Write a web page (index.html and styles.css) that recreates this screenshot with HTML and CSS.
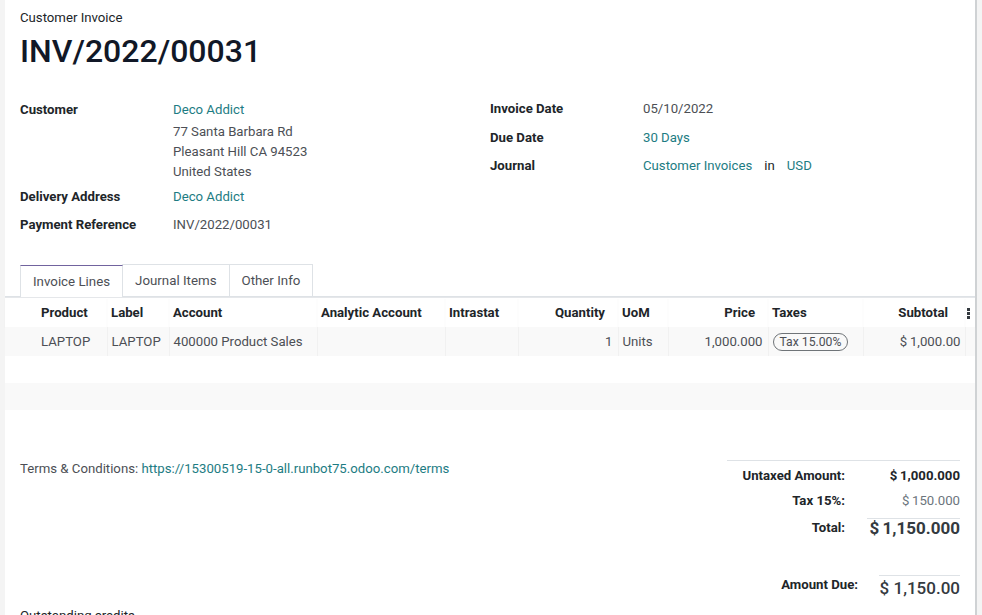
FILE: index.html
```html
<!DOCTYPE html>
<html>
<head>
<meta charset="utf-8">
<link rel="stylesheet" href="styles.css">
</head>
<body>
<div class="page">
  <div class="sheet">
    <div class="head">
      <div class="doc-type">Customer Invoice</div>
      <h1 class="title">INV/2022/00031</h1>
    </div>
    <div class="groups">
      <div class="group">
        <div class="field customer">
          <div class="label">Customer</div>
          <div class="value">
            <a class="link first-link">Deco Addict</a>
            <div class="addr">77 Santa Barbara Rd</div>
            <div class="addr">Pleasant Hill CA 94523</div>
            <div class="addr">United States</div>
          </div>
        </div>
        <div class="field">
          <div class="label">Delivery Address</div>
          <div class="value"><a class="link">Deco Addict</a></div>
        </div>
        <div class="field">
          <div class="label">Payment Reference</div>
          <div class="value">INV/2022/00031</div>
        </div>
      </div>
      <div class="group right">
        <div class="field">
          <div class="label">Invoice Date</div>
          <div class="value">05/10/2022</div>
        </div>
        <div class="field">
          <div class="label">Due Date</div>
          <div class="value"><a class="link">30 Days</a></div>
        </div>
        <div class="field">
          <div class="label">Journal</div>
          <div class="value"><a class="link">Customer Invoices</a><span class="in">in</span><a class="link">USD</a></div>
        </div>
      </div>
    </div>

    <div class="tabs">
      <div class="tab active">Invoice Lines</div>
      <div class="tab">Journal Items</div>
      <div class="tab">Other Info</div>
    </div>

    <table class="lines">
      <colgroup>
        <col style="width:102px"><col style="width:62px"><col style="width:148px"><col style="width:128px"><col style="width:73px"><col style="width:100px"><col style="width:50px"><col style="width:100px"><col style="width:95px"><col style="width:102px"><col style="width:10px">
      </colgroup>
      <thead>
        <tr>
          <th class="first">Product</th>
          <th>Label</th>
          <th>Account</th>
          <th>Analytic Account</th>
          <th>Intrastat</th>
          <th class="num">Quantity</th>
          <th>UoM</th>
          <th class="num">Price</th>
          <th>Taxes</th>
          <th class="num">Subtotal</th>
          <th class="opt"><span class="kebab"><i></i><i></i><i></i></span></th>
        </tr>
      </thead>
      <tbody>
        <tr class="odd">
          <td class="first">LAPTOP</td>
          <td>LAPTOP</td>
          <td>400000 Product Sales</td>
          <td></td>
          <td></td>
          <td class="num">1</td>
          <td>Units</td>
          <td class="num">1,000.000</td>
          <td><span class="badge">Tax 15.00%</span></td>
          <td class="num sub">$&#8201;1,000.00</td>
          <td></td>
        </tr>
        <tr class="empty"><td colspan="11"></td></tr>
        <tr class="empty odd"><td colspan="11"></td></tr>
      </tbody>
    </table>

    <div class="footer">
      <div class="terms">Terms &amp; Conditions: <a class="link">https://15300519-15-0-all.runbot75.odoo.com/terms</a></div>
      <div class="totals">
        <div class="trow untaxed">
          <span class="tlabel">Untaxed Amount:</span>
          <span class="tval strong">$&#8201;1,000.000</span>
        </div>
        <div class="trow tax">
          <span class="tlabel">Tax 15%:</span>
          <span class="tval muted">$&#8201;150.000</span>
        </div>
        <div class="trow total">
          <span class="tlabel">Total:</span>
          <span class="tval big">$&#8201;1,150.000</span>
        </div>
        <div class="trow due">
          <span class="tlabel">Amount Due:</span>
          <span class="tval due-val">$ 1,150.00</span>
        </div>
      </div>
    </div>
    <div class="outstanding">Outstanding credits</div>
  </div>
</div>
</body>
</html>
```

FILE: styles.css
```css
html, body {
  margin: 0;
  padding: 0;
  background: #eceeef;
  overflow: hidden;
}
body {
  font-family: Roboto, "Noto Sans", sans-serif;
  font-size: 13.2px;
  color: #212529;
}
.page {
  padding-left: 5px;
  height: 615px;
  background: #f4f4f4;
  display: flex;
}
.sheet {
  width: 972px;
  flex: none;
  background: #fff;
  border-right: 2px solid #cfd2d4;
  padding: 0 15px 0 15px;
  box-sizing: border-box;
  height: 640px;
}
.head {
  padding-top: 10px;
}
.doc-type {
  font-size: 13.2px;
  line-height: 16px;
  color: #212529;
}
.title {
  margin: 6px 0 0 0;
  font-size: 32px;
  font-weight: 500;
  line-height: 38px;
  color: #111827;
}
.groups {
  display: flex;
  margin-top: 30px;
}
.group {
  width: 470px;
  flex: none;
}
.group.right {
  margin-top: -1px;
}
.field {
  display: flex;
  margin-bottom: 8px;
}
.field.customer {
  margin-bottom: 5px;
}
.first-link {
  margin-bottom: 2px;
}
.label {
  width: 153px;
  flex: none;
  font-weight: 700;
  line-height: 20px;
  color: #212529;
}
.value {
  color: #4c4f55;
  line-height: 20px;
}
.group.right .field {
  margin-bottom: 8.5px;
}
.link {
  color: #1d7c83;
  text-decoration: none;
  display: inline-block;
}
.addr {
  line-height: 20px;
}
.in {
  margin: 0 12px 0 12px;
  color: #212529;
}
.tabs {
  display: flex;
  margin: 21px -15px 0 -15px;
  padding-left: 15px;
  border-bottom: 1px solid #dee2e6;
  height: 32px;
}
.tab {
  border: 1px solid #dee2e6;
  border-bottom: none;
  margin-right: -1px;
  padding: 0 12px;
  line-height: 32px;
  font-size: 13.3px;
  color: #4c4f55;
  background: #fff;
}
.tab.active {
  border-top: 1px solid #71639e;
  position: relative;
  top: 1px;
}
.lines {
  margin: 0 -15px 0 -15px;
  width: 970px;
  border-collapse: collapse;
  table-layout: fixed;
  border-top: 1px solid #e5e7ea;
}
.lines th {
  text-align: left;
  font-weight: 700;
  height: 29px;
  padding: 0 4px;
  color: #212529;
  white-space: nowrap;
  box-shadow: 0 1px 1px rgba(0,0,0,0.06);
}
.lines td {
  height: 29px;
  padding: 0 4px;
  color: #4c4f55;
  white-space: nowrap;
  border-left: 1px solid #f1f1f1;
}
.lines td:first-child { border-left: none; }
.lines .first { padding-left: 36px; }
.lines .num { text-align: right; }
.lines th.num { padding-right: 13px; }
.lines td.num { padding-right: 5px; }
.lines td.sub { padding-right: 4px; }
.lines th.num:nth-child(10) { padding-right: 17px; }
.lines tr.odd td { background: #f9f9f9; }
.lines tr.empty td { height: 27px; }
.badge {
  display: inline-block;
  border: 1px solid #6f7478;
  border-radius: 10px;
  padding: 0 6px;
  line-height: 16px;
  font-size: 12.2px;
  color: #4c4f55;
}
.opt { padding: 0 !important; }
.kebab {
  display: inline-flex;
  flex-direction: column;
  gap: 1px;
  vertical-align: middle;
  margin-left: 2px;
}
.kebab i {
  display: block;
  width: 3px;
  height: 3px;
  background: #343a40;
}
.footer {
  display: flex;
  justify-content: space-between;
  margin-top: 50px;
}
.terms {
  padding-top: 1px;
  color: #4c4f55;
  line-height: 16px;
}
.terms .link { display: inline; }
.totals {
  width: 233px;
  border-top: 1px solid #dee2e6;
  padding-top: 5px;
}
.trow {
  display: flex;
  justify-content: flex-end;
  align-items: flex-start;
}
.trow.untaxed { height: 25px; }
.trow.tax { height: 27px; }
.trow.total { height: 57px; }
.tlabel {
  font-weight: 700;
  text-align: right;
  color: #212529;
  line-height: 20px;
}
.tval {
  width: 115px;
  text-align: right;
  line-height: 20px;
}
.strong { font-weight: 700; color: #212529; }
.muted { color: #6c757d; }
.trow.total .tval {
  border-top: 1px solid #dee2e6;
  width: 93px;
  margin-left: 22px;
  line-height: 18px;
}
.big {
  font-size: 17px;
  font-weight: 700;
  color: #343a40;
}
.trow.due .tval {
  width: 81px;
  margin-left: 21px;
  border-top: 1px solid #dee2e6;
  line-height: 20px;
  padding-top: 2px;
  font-size: 17px;
  font-weight: 500;
  color: #343a40;
}
.outstanding {
  margin-top: 10px;
  color: #212529;
}
```
